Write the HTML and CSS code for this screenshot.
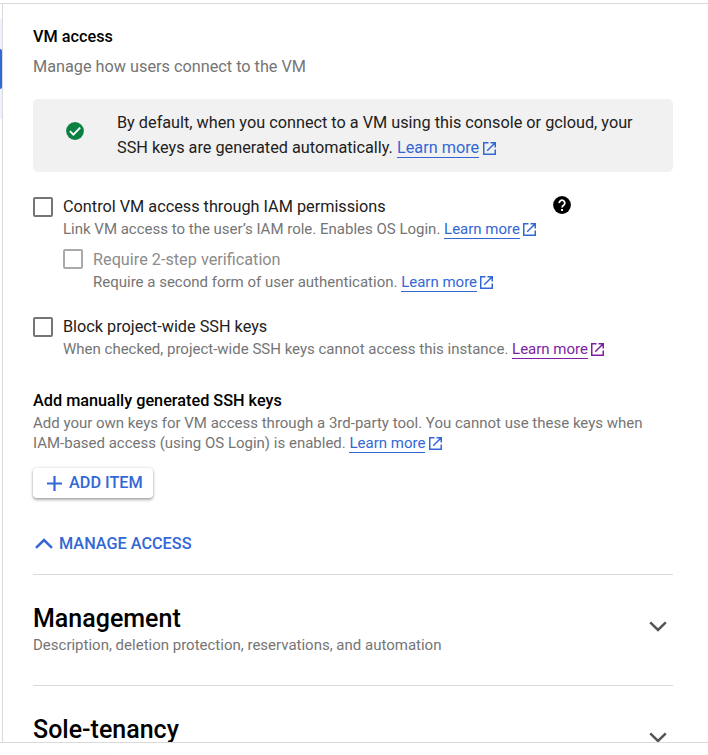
FILE: index.html
```html
<!DOCTYPE html>
<html lang="en">
<head>
<meta charset="utf-8">
<title>VM access</title>
<link rel="stylesheet" href="styles.css">
</head>
<body>
<svg class="defs" aria-hidden="true">
  <symbol id="ext" viewBox="0 0 13 13"><path d="M5.5 .75H.75v11.5h11.5V7.5M7.5 .75h4.75V5.5M12 1 4.2 8.8" fill="none" stroke="currentColor" stroke-width="1.5"/></symbol>
  <symbol id="down" viewBox="0 0 18 11"><path d="M1.2 1.3 9 9l7.8-7.7" fill="none" stroke="currentColor" stroke-width="2.5"/></symbol>
</svg>
<div class="window">
  <aside class="rail"><div class="rail-item"><div class="rail-thumb"></div></div></aside>
  <main class="panel">
    <h3 class="heading">VM access</h3>
    <p class="lead">Manage how users connect to the VM</p>

    <section class="callout">
      <svg class="check" viewBox="0 0 18 18"><circle cx="9" cy="9" r="8.9" fill="#0b8043"/><path d="m3.9 9.2 3.5 3.5 6.8-7" fill="none" stroke="#fff" stroke-width="1.9"/></svg>
      <p class="callout-text">By default, when you connect to a VM using this console or gcloud, your<br>SSH keys are generated automatically. <a class="link">Learn more</a><svg class="ext"><use href="#ext"/></svg></p>
    </section>

    <div class="option">
      <span class="box"></span>
      <div class="option-body">
        <div class="label">Control VM access through IAM permissions
          <svg class="help" viewBox="0 0 18 18"><circle cx="9" cy="9" r="8.9"/><path d="M6.2 7.1a2.8 2.8 0 1 1 4.4 2.2C9.5 10 9.1 10.4 9.1 11.6" fill="none" stroke="#fff" stroke-width="1.8"/><path d="M8.1 13h1.9v1.9H8.1z" fill="#fff"/></svg>
        </div>
        <div class="hint">Link VM access to the user’s IAM role. Enables OS Login. <a class="link">Learn more</a><svg class="ext tight"><use href="#ext"/></svg></div>
      </div>
    </div>
    <div class="option nested">
      <span class="box"></span>
      <div class="option-body">
        <div class="label">Require 2-step verification</div>
        <div class="hint">Require a second form of user authentication. <a class="link">Learn more</a><svg class="ext tight"><use href="#ext"/></svg></div>
      </div>
    </div>
    <div class="option block">
      <span class="box"></span>
      <div class="option-body">
        <div class="label">Block project-wide SSH keys</div>
        <div class="hint">When checked, project-wide SSH keys cannot access this instance. <a class="link visited">Learn more</a><svg class="ext tight visited"><use href="#ext"/></svg></div>
      </div>
    </div>

    <h3 class="heading keys">Add manually generated SSH keys</h3>
    <p class="hint">Add your own keys for VM access through a 3rd-party tool. You cannot use these keys when<br>IAM-based access (using OS Login) is enabled. <a class="link">Learn more</a><svg class="ext"><use href="#ext"/></svg></p>
    <button class="add"><svg class="plus" viewBox="0 0 15 15"><path d="M7.5 0v15M0 7.5h15" stroke="currentColor" stroke-width="2.2"/></svg>ADD ITEM</button>
    <div class="manage"><svg class="up" viewBox="0 0 18 11"><path d="M1 9.8 9 2l8 7.8" fill="none" stroke="currentColor" stroke-width="2.5"/></svg>MANAGE ACCESS</div>

    <section class="group">
      <div><h2 class="title">Management</h2><p class="hint">Description, deletion protection, reservations, and automation</p></div>
      <svg class="down"><use href="#down"/></svg>
    </section>
    <section class="group">
      <div><h2 class="title">Sole-tenancy</h2></div>
      <svg class="down"><use href="#down"/></svg>
    </section>
  </main>
</div>
<footer class="footer"><div class="footer-button"></div></footer>
</body>
</html>
```
FILE: styles.css
```css
* { box-sizing: border-box; }
body { margin: 0; height: 755px; overflow: hidden; padding-top: 3px; background: #fff; font-family: Roboto, "Liberation Sans", sans-serif; color: #212121; white-space: nowrap; }
h2, h3, p { margin: 0; }
.defs { display: block; width: 0; height: 0; }
.window { display: flex; height: 740px; overflow: hidden; border-top: 1px solid #dadada; border-bottom: 1px solid #dadada; }
.rail { width: 3px; border-right: 1px solid #dadada; flex: none; padding-top: 15px; }
.rail-item { height: 100px; padding-top: 30px; background: #eff2fc; }
.rail-thumb { height: 40px; background: #3367d6; border-radius: 0 2px 2px 0; }
.panel { width: 670px; padding: 20px 0 0 30px; flex: none; }
.heading { font-size: 16.25px; line-height: 25px; font-weight: 500; color: #000; }
.lead { margin-top: 5px; font-size: 16.25px; line-height: 25px; color: #757575; }
.callout { display: flex; height: 73px; margin-top: 20px; padding: 11px 0 0 33px; background: #f1f1f1; border-radius: 5px; }
.check { width: 18px; height: 18px; margin: 12px 33px 0 0; }
.callout-text { font-size: 16.25px; line-height: 25px; }
.link { color: #3367d6; display: inline-block; line-height: 18px; border-bottom: 1px solid; }
.visited { color: #7b1fa2 !important; }
.ext { width: 13px; height: 13px; margin-left: 4px; color: #3367d6; vertical-align: -2px; }
.ext.tight { margin-left: 3px; }
.option { display: flex; margin-top: 22px; }
.box { width: 20px; height: 20px; margin: 3px 10px 0 0; border: 2px solid #757575; border-radius: 2px; flex: none; }
.option-body { width: 508px; }
.label { display: flex; justify-content: space-between; font-size: 16.25px; line-height: 25px; }
.help { width: 18px; height: 18px; margin: 2px 0 0; }
.hint { font-size: 15px; line-height: 20px; color: #757575; }
.nested { margin: 8px 0 0 30px; }
.nested .box { border-color: #a9a9a9; margin-top: 2px; }
.nested .label { color: #8c8c8c; }
.block { margin-top: 22px; }
.keys { margin-top: 29px; }
.add { display: flex; align-items: center; width: 120px; height: 30px; margin-top: 15px; padding: 0 0 0 14px; border: 0; border-radius: 4px; background: #fff; box-shadow: 0 2px 3px rgba(0,0,0,.3), 0 0 3px rgba(0,0,0,.16); color: #3367d6; font: 500 16.25px/28px Roboto, sans-serif; padding-bottom: 1px; white-space: nowrap; }
.plus { width: 15px; height: 15px; margin: 1px 7px 0 0; }
.manage { display: flex; align-items: center; height: 30px; margin: 30px 0 16px; font-size: 16.25px; font-weight: 500; color: #3367d6; }
.up { width: 18px; height: 11px; margin: 0 6px 0 2px; }
.group { display: flex; justify-content: space-between; height: 111px; padding-top: 28px; border-top: 1px solid #dadada; }
.title { font-size: 25px; line-height: 32px; font-weight: 500; color: #000; }
.down { width: 18px; height: 11px; margin: 18px 6px 0 0; color: #555; }
.footer { padding: 11px 0 0 33px; }
.footer-button { width: 86px; height: 1px; background: #fafafa; }
```
